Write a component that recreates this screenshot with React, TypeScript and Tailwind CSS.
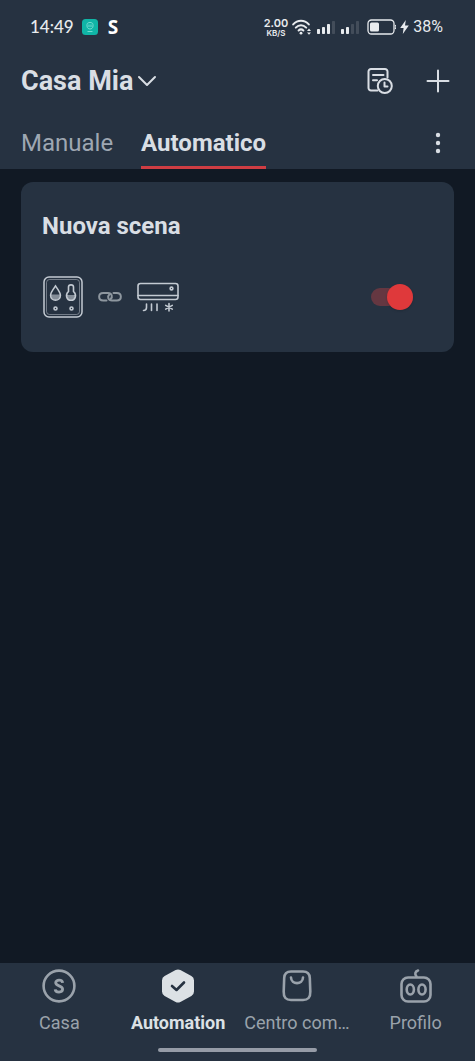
import React, { useState } from 'react';

type TabId = 'manual' | 'auto';

const TABS: { id: TabId; label: string }[] = [
  { id: 'manual', label: 'Manuale' },
  { id: 'auto', label: 'Automatico' },
];

const WifiIcon = () => (
  <svg width="20" height="16" viewBox="0 0 20 16" fill="none" stroke="currentColor" strokeWidth="2" strokeLinecap="round">
    <path d="M1.2 5.4C5.6 0.6 12.4 0.6 16.8 5.4" />
    <path d="M3.8 8.6C6.8 5.5 11.2 5.5 14.2 8.6" />
    <path d="M6.6 11.5C8 10.2 10 10.2 11.4 11.5" />
    <circle cx="9" cy="14.2" r="1.4" fill="currentColor" stroke="none" />
    <path d="M15 12L17 9.6L19 12ZM15 13.4L17 15.8L19 13.4Z" fill="currentColor" stroke="none" />
  </svg>
);

const SignalIcon: React.FC<{ bars: number }> = ({ bars }) => (
  <svg width="20" height="14" viewBox="0 0 20 14" fill="currentColor">
    {[5, 7, 10, 13].map((h, i) => (
      <rect key={h} x={1 + i * 5} y={14 - h} width="3" height={h} rx="0.8" opacity={i < bars ? 1 : 0.15} />
    ))}
  </svg>
);

const BatteryIcon = () => (
  <svg width="30" height="16" viewBox="0 0 30 16" fill="none">
    <rect x="2" y="1" width="26" height="14" rx="3.5" stroke="currentColor" strokeWidth="1.3" />
    <rect x="4" y="3.5" width="9" height="9" rx="1.5" fill="currentColor" />
    <path d="M29.2 6C30 7 30 9 29.2 10" stroke="currentColor" strokeWidth="1.2" />
  </svg>
);

const BoltIcon = () => (
  <svg width="9" height="14" viewBox="0 0 9 14" fill="currentColor">
    <path d="M5.8 0L0.2 8H3.6L2.8 14L8.8 5.6H5Z" />
  </svg>
);

const StatusBar = () => (
  <div className="flex h-[54px] items-center pr-8 pl-[30px] text-[#e8ebee]">
    <span className="font-['Lato',sans-serif] text-[17px] font-medium">14:49</span>
    <svg className="ml-2" width="16" height="16" viewBox="0 0 16 16" fill="none">
      <rect width="16" height="16" rx="3.5" fill="#10b5a6" />
      <g stroke="#7fe0d6" strokeWidth="0.9">
        <path d="M5 5.5C5 2.8 11 2.8 11 5.5V7C11 11 5 11 5 7ZM5.5 12.5H10.5" />
        <path d="M7 5.5V8M9 5.5V8" />
      </g>
    </svg>
    <span className="ml-2.5 font-['Open_Sans',sans-serif] text-[19px] font-bold text-white">S</span>
    <div className="ml-auto flex items-center">
      <div className="flex flex-col items-center pt-0.5 font-['Inter',sans-serif] font-semibold">
        <span className="text-[11px] leading-[10px]">2.00</span>
        <span className="text-[8px] leading-[10px]">KB/S</span>
      </div>
      <div className="ml-1 flex items-center gap-1">
        <WifiIcon />
        <SignalIcon bars={3} />
        <SignalIcon bars={2} />
      </div>
      <div className="ml-1.5 flex items-center gap-1">
        <BatteryIcon />
        <BoltIcon />
        <span className="text-base">38%</span>
      </div>
    </div>
  </div>
);

const HistoryIcon = () => (
  <svg width="28" height="28" viewBox="0 0 28 28" fill="none" stroke="currentColor" strokeWidth="2" strokeLinecap="round" strokeLinejoin="round">
    <path d="M11.5 23.5H5A2.5 2.5 0 0 1 2.5 21V4.5A2.5 2.5 0 0 1 5 2H19A2.5 2.5 0 0 1 21.5 4.5V10.5" />
    <path d="M7 8H17.5M7 13.3H11" />
    <circle cx="18.8" cy="19" r="7" />
    <path d="M18.5 15.5V19.5H21.5" />
  </svg>
);

const PlusIcon = () => (
  <svg width="24" height="24" viewBox="0 0 24 24" fill="none" stroke="currentColor" strokeWidth="2" strokeLinecap="round">
    <path d="M12 1.5V22.5M1.5 12H22.5" />
  </svg>
);

// Wall sensor with humidity drop and thermometer
const SensorIcon = () => (
  <svg width="40" height="42" viewBox="0 0 40 42" fill="none" stroke="currentColor">
    <rect x="1" y="1" width="38" height="40" rx="5" strokeWidth="1.5" />
    <rect x="3.5" y="3.5" width="33" height="35" rx="3" strokeWidth="0.7" opacity="0.7" />
    <path d="M7.8 18.5H17.2C16.8 25.6 8.2 25.6 7.8 18.5ZM23.8 19H32.2C31.5 25.5 24.5 25.5 23.8 19Z" fill="currentColor" stroke="none" opacity="0.6" />
    <path d="M12.5 10C10 13.5 7.6 16.5 7.6 19.2C7.6 25.8 17.4 25.8 17.4 19.2C17.4 16.5 15 13.5 12.5 10Z" strokeWidth="1.6" />
    <path d="M25.5 15.5V11C25.5 8.2 30.5 8.2 30.5 11V15.5C34 18.5 32.6 24.3 28 24.3C23.4 24.3 22 18.5 25.5 15.5Z" strokeWidth="1.6" />
    <circle cx="12.5" cy="32.5" r="1.5" strokeWidth="1.6" />
    <circle cx="28.5" cy="32.5" r="1.5" strokeWidth="1.6" />
  </svg>
);

const LinkIcon = () => (
  <svg width="24" height="12" viewBox="0 0 24 12" fill="none" stroke="currentColor" strokeWidth="2" strokeLinecap="round">
    <path d="M8.5 9.5H5.2C-0.2 9.5 -0.2 2 5.2 2H10C14 2 15 6 12.5 8.3" />
    <path d="M15.5 2H18.8C24.2 2 24.2 9.5 18.8 9.5H14C10 9.5 9 5.5 11.5 3.2" />
  </svg>
);

const AirConditionerIcon = () => (
  <svg width="42" height="30" viewBox="0 0 42 30" fill="none" stroke="currentColor" strokeWidth="1.6" strokeLinecap="round">
    <rect x="1" y="1.5" width="40" height="16" rx="2.5" />
    <path d="M1 13.5H41" />
    <circle cx="34.5" cy="6.5" r="1.4" />
    <path d="M9.5 22V25.5C9.5 27.5 8.5 28.5 6.5 28.5M14.5 22V28.5M20 22V28.5" />
    <path d="M32 21.5V29M28.7 23.4L35.3 27.1M35.3 23.4L28.7 27.1" />
  </svg>
);

const SceneCard: React.FC<{ title: string }> = ({ title }) => {
  const [enabled, setEnabled] = useState(true);

  return (
    <section className="rounded-xl bg-[#263241] px-[21px] pt-7 pb-[34px]">
      <h2 className="text-2xl leading-8 font-bold text-[#d9dee4]">{title}</h2>
      <div className="mt-[34px] flex items-center pr-5 text-[#c3cad2]">
        <div className="ml-px flex items-center gap-[15px]">
          <SensorIcon />
          <span className="text-[#8e979f]"><LinkIcon /></span>
          <AirConditionerIcon />
        </div>
        <input
          type="checkbox"
          role="switch"
          aria-label={title}
          checked={enabled}
          onChange={(e) => setEnabled(e.target.checked)}
          className="ml-auto flex h-[18px] w-[42px] cursor-pointer appearance-none items-center rounded-full bg-[#4b5563] before:size-[26px] before:shrink-0 before:rounded-full before:bg-[#9ca3af] before:shadow-sm checked:justify-end checked:bg-[#653741] checked:before:bg-[#df393b]"
        />
      </div>
    </section>
  );
};

const HomeIcon = () => (
  <svg width="36" height="36" viewBox="0 0 36 36" fill="none">
    <circle cx="18" cy="18" r="15.4" stroke="currentColor" strokeWidth="2.6" />
    <path d="M21.6 14.8C21.3 11.2 14.7 11.2 14.7 14.8C14.7 18.5 21.6 17.2 21.6 21.1C21.6 25 14.5 25 14.2 21.3" stroke="currentColor" strokeWidth="2.8" />
  </svg>
);

const AutomationIcon = () => (
  <svg width="36" height="36" viewBox="0 0 36 36" fill="none" strokeLinejoin="round">
    <path d="M18 6.5L29 12.5V23.5L18 29.5L7 23.5V12.5Z" fill="currentColor" stroke="currentColor" strokeWidth="10" />
    <path d="M12 18L16.5 22L24 14.5" stroke="#263241" strokeWidth="2.6" strokeLinecap="round" />
  </svg>
);

const ShopIcon = () => (
  <svg width="36" height="36" viewBox="0 0 36 36" fill="none" stroke="currentColor" strokeWidth="2.6" strokeLinecap="round">
    <path d="M12 3.5H24C28.5 3.5 30.6 5.5 30.8 10L31.3 23.5C31.5 29.5 29 32 24 32H12C7 32 4.5 29.5 4.7 23.5L5.2 10C5.4 5.5 7.5 3.5 12 3.5Z" />
    <path d="M12 9.5C12.3 17 23.7 17 24 9.5" />
  </svg>
);

const ProfileIcon = () => (
  <svg width="36" height="36" viewBox="0 0 36 36" fill="none" stroke="currentColor" strokeWidth="2.6" strokeLinecap="round">
    <rect x="3.5" y="9.5" width="29" height="24" rx="6.5" />
    <ellipse cx="12.3" cy="21.5" rx="3.6" ry="5" />
    <ellipse cx="24" cy="21.5" rx="3.6" ry="5" />
    <path d="M20 2.5C17 3.5 16.5 6 18.5 8.5" />
  </svg>
);

const NAV_ITEMS = [
  { label: 'Casa', icon: HomeIcon },
  { label: 'Automation', icon: AutomationIcon, active: true },
  { label: 'Centro com…', icon: ShopIcon },
  { label: 'Profilo', icon: ProfileIcon },
];

const BottomNav = () => (
  <nav className="bg-[#263241] pt-[5px] pb-[9px]">
    <div className="grid grid-cols-4">
      {NAV_ITEMS.map(({ label, icon: Icon, active }) => (
        <a
          key={label}
          href="#"
          aria-current={active ? 'page' : undefined}
          className={`flex flex-col items-center gap-[7px] text-lg leading-6 whitespace-nowrap ${active ? 'font-bold text-[#dce1e5]' : 'text-[#9aa2ab]'}`}
        >
          <Icon />
          {label}
        </a>
      ))}
    </div>
    <div className="mx-auto mt-[13px] h-1 w-1/3 rounded-full bg-[#969ca7]" />
  </nav>
);

export default function App() {
  const [tab, setTab] = useState<TabId>('auto');

  return (
    <div className="flex min-h-screen flex-col bg-[#111924] font-['Roboto',sans-serif]">
      <header className="bg-[#263241] text-[#d9dee4]">
        <StatusBar />
        <div className="flex h-[54px] items-center justify-between pr-[25px] pl-[21px]">
          <button type="button" className="flex items-center gap-1 text-[27px] leading-8 font-bold">
            Casa Mia
            <svg width="20" height="12" viewBox="0 0 20 12" fill="none" stroke="currentColor" strokeWidth="2" strokeLinecap="round" strokeLinejoin="round">
              <path d="M2 2L10 10L18 2" />
            </svg>
          </button>
          <div className="flex items-center gap-8">
            <button type="button" aria-label="Cronologia"><HistoryIcon /></button>
            <button type="button" aria-label="Aggiungi"><PlusIcon /></button>
          </div>
        </div>
        <div className="flex h-[61px] items-stretch pr-[25px] pl-[21px]">
          <div role="tablist" className="flex gap-7">
            {TABS.map(({ id, label }) => (
              <button
                key={id}
                type="button"
                role="tab"
                aria-selected={tab === id}
                onClick={() => setTab(id)}
                className={`border-b-[3px] pt-[11px] text-2xl ${tab === id ? 'border-[#cf3d43] font-bold' : 'border-transparent text-[#9ea7b2]'}`}
              >
                {label}
              </button>
            ))}
          </div>
          <button type="button" aria-label="Altro" className="ml-auto pt-2">
            <svg width="24" height="24" viewBox="0 0 24 24" fill="currentColor">
              <circle cx="12" cy="4" r="2.2" />
              <circle cx="12" cy="12" r="2.2" />
              <circle cx="12" cy="20" r="2.2" />
            </svg>
          </button>
        </div>
      </header>

      <main className="flex-1 px-[21px] pt-[13px]">
        {tab === 'auto' && <SceneCard title="Nuova scena" />}
      </main>

      <BottomNav />
    </div>
  );
}
